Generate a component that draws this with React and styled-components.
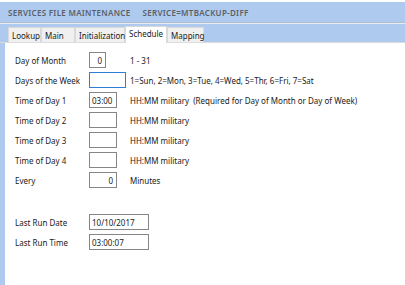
import React from 'react';
import styled, { createGlobalStyle } from 'styled-components';

const GlobalStyle = createGlobalStyle`
  html, body {
    margin: 0;
    padding: 0;
    background: #ffffff;
  }
  body {
    font-family: "Noto Sans", "Open Sans", sans-serif;
  }
`;

const blue = '#aecbef';

const Page = styled.div`
  width: 405px;
  height: 285px;
  display: flex;
  flex-direction: column;
  background: #ffffff;
  padding-top: 2px;
  box-sizing: border-box;
  overflow: hidden;
`;

const Header = styled.div`
  height: 20px;
  background: ${blue};
  border-bottom: 1px solid #b3bfcd;
  display: flex;
  align-items: center;
  padding-left: 8px;
  gap: 12px;
  color: #5c5f66;
  font-size: 8px;
  font-weight: 600;
  letter-spacing: 0.3px;
`;

const TabStrip = styled.div`
  height: 18px;
  background: ${blue};
  border-top: 1px solid #e4ecf7;
  border-bottom: 1px solid #dcdcdc;
  display: flex;
  align-items: flex-end;
  padding-left: 8px;
`;

const Tab = styled.div`
  width: ${(p) => p.$w}px;
  height: ${(p) => (p.$active ? 17 : 15)}px;
  box-sizing: border-box;
  background: ${(p) => (p.$active ? '#ffffff' : '#f0f0f0')};
  border: 1px solid #d9d9d9;
  border-bottom: none;
  margin-bottom: ${(p) => (p.$active ? -1 : 0)}px;
  display: flex;
  align-items: ${(p) => (p.$active ? 'flex-start' : 'center')};
  padding-top: ${(p) => (p.$active ? 1 : 0)}px;
  padding-left: 3px;
  font-size: 8px;
  color: #1a1a1a;
`;

const Body = styled.div`
  flex: 1;
  display: flex;
`;

const SideStrip = styled.div`
  width: 5px;
  background: ${blue};
`;

const Panel = styled.div`
  flex: 1;
  background: #ffffff;
  padding: 7px 0 0 10px;
  display: flex;
  flex-direction: column;
`;

const Row = styled.div`
  height: 20px;
  display: flex;
  align-items: center;
  font-size: 8px;
  color: #1a1a1a;
`;

const Label = styled.div`
  width: 74px;
`;

const InputCell = styled.div`
  width: 41px;
  display: flex;
`;

const Field = styled.div`
  width: ${(p) => p.$w}px;
  height: 16px;
  flex: none;
  box-sizing: border-box;
  border: 1px solid ${(p) => (p.$focus ? '#2b7fd6' : '#868686')};
  background: #ffffff;
  display: flex;
  align-items: center;
  justify-content: ${(p) => (p.$right ? 'flex-end' : 'flex-start')};
  padding: 0 3px 0 2px;
  font-size: 8px;
  color: #1a1a1a;
`;

const Help = styled.div`
  white-space: pre;
`;

const Spacer = styled.div`
  height: 22px;
`;

const tabs = [
  { name: 'Lookup', w: 33 },
  { name: 'Main', w: 34 },
  { name: 'Initialization', w: 50 },
  { name: 'Schedule', w: 42, active: true },
  { name: 'Mapping', w: 37 },
];

const rows = [
  { label: 'Day of Month', w: 17, value: '0', right: true, help: '1 - 31' },
  { label: 'Days of the Week', w: 37, value: '', focus: true, help: '1=Sun, 2=Mon, 3=Tue, 4=Wed, 5=Thr, 6=Fri, 7=Sat' },
  { label: 'Time of Day 1', w: 28, value: '03:00', help: 'HH:MM military  (Required for Day of Month or Day of Week)' },
  { label: 'Time of Day 2', w: 28, value: '', help: 'HH:MM military' },
  { label: 'Time of Day 3', w: 28, value: '', help: 'HH:MM military' },
  { label: 'Time of Day 4', w: 28, value: '', help: 'HH:MM military' },
  { label: 'Every', w: 28, value: '0', right: true, help: 'Minutes' },
];

const lastRun = [
  { label: 'Last Run Date', value: '10/10/2017' },
  { label: 'Last Run Time', value: '03:00:07' },
];

export default function App() {
  return (
    <Page>
      <GlobalStyle />
      <Header>
        <span>SERVICES FILE MAINTENANCE</span>
        <span>SERVICE=MTBACKUP-DIFF</span>
      </Header>
      <TabStrip>
        {tabs.map((t) => (
          <Tab key={t.name} $w={t.w} $active={t.active}>{t.name}</Tab>
        ))}
      </TabStrip>
      <Body>
        <SideStrip />
        <Panel>
          {rows.map((r) => (
            <Row key={r.label}>
              <Label>{r.label}</Label>
              <InputCell>
                <Field $w={r.w} $right={r.right} $focus={r.focus}>{r.value}</Field>
              </InputCell>
              <Help>{r.help}</Help>
            </Row>
          ))}
          <Spacer />
          {lastRun.map((r) => (
            <Row key={r.label}>
              <Label>{r.label}</Label>
              <Field $w={60}>{r.value}</Field>
            </Row>
          ))}
        </Panel>
      </Body>
    </Page>
  );
}
